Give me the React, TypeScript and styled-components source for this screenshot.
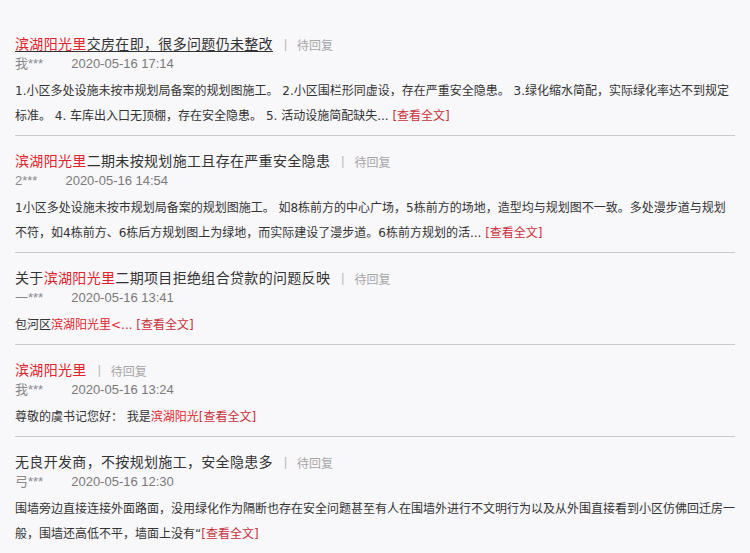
import React from "react";
import styled, { createGlobalStyle } from "styled-components";

const GlobalStyle = createGlobalStyle`
  html, body {
    margin: 0;
    padding: 0;
    background: #f8f7fa;
  }
  body {
    font-family: "Liberation Sans", "Noto Sans CJK SC", sans-serif;
    color: #333;
  }
`;

const Page = styled.div`
  width: 720px;
  padding: 18px 15px 0;
`;

const Item = styled.div`
  padding: 15px 0 6px;
  border-bottom: 1px solid #cacaca;

  &:first-child {
    padding-top: 16px;
  }
`;

const TitleRow = styled.div`
  display: flex;
  align-items: center;
  height: 20px;
`;

const Title = styled.a<{ $hover?: boolean }>`
  font-size: 14px;
  letter-spacing: 0.33px;
  line-height: 20px;
  color: #333;
  text-decoration: ${(p) => (p.$hover ? "underline" : "none")};
  text-underline-offset: 2px;
  cursor: pointer;
`;

const Red = styled.span`
  color: #e0242b;
`;

const Sep = styled.span`
  font-size: 12px;
  color: #b5b5b5;
  margin: 0 10px 0 11px;
`;

const Status = styled.span`
  font-size: 12px;
  color: #a6a6a6;
`;

const Meta = styled.div`
  margin-top: 3px;
  font-size: 13px;
  line-height: 13px;
  color: #8a8a8a;
`;

const Date = styled.span`
  margin-left: 28px;
  color: #7a7a7a;
`;

const Body = styled.p`
  margin: 9px 0 0;
  font-family: "DejaVu Sans", "Noto Sans CJK SC", sans-serif;
  font-size: 12px;
  line-height: 25px;
  color: #333;
  word-break: break-all;
`;

const More = styled.a`
  color: #c8323a;
  cursor: pointer;
`;

type Post = {
  title: React.ReactNode;
  author: string;
  date: string;
  body: React.ReactNode;
  hover?: boolean;
};

const NAME = <Red>滨湖阳光里</Red>;

const posts: Post[] = [
  {
    title: <>{NAME}交房在即，很多问题仍未整改</>,
    author: "我***",
    date: "2020-05-16 17:14",
    hover: true,
    body: (
      <>
        1.小区多处设施未按市规划局备案的规划图施工。 2.小区围栏形同虚设，存在严重安全隐患。 3.绿化缩水简配，实际绿化率达不到规定标准。 4. 车库出入口无顶棚，存在安全隐患。 5. 活动设施简配缺失...{" "}
        <More>[查看全文]</More>
      </>
    ),
  },
  {
    title: <>{NAME}二期未按规划施工且存在严重安全隐患</>,
    author: "2***",
    date: "2020-05-16 14:54",
    body: (
      <>
        1小区多处设施未按市规划局备案的规划图施工。 如8栋前方的中心广场，5栋前方的场地，造型均与规划图不一致。多处漫步道与规划不符，如4栋前方、6栋后方规划图上为绿地，而实际建设了漫步道。6栋前方规划的活...{" "}
        <More>[查看全文]</More>
      </>
    ),
  },
  {
    title: <>关于{NAME}二期项目拒绝组合贷款的问题反映</>,
    author: "一***",
    date: "2020-05-16 13:41",
    body: (
      <>
        包河区<Red>滨湖阳光里&lt;...</Red> <More>[查看全文]</More>
      </>
    ),
  },
  {
    title: NAME,
    author: "我***",
    date: "2020-05-16 13:24",
    body: (
      <>
        尊敬的虞书记您好： 我是<Red>滨湖阳光</Red>
        <More>[查看全文]</More>
      </>
    ),
  },
  {
    title: <>无良开发商，不按规划施工，安全隐患多</>,
    author: "弓***",
    date: "2020-05-16 12:30",
    body: (
      <>
        围墙旁边直接连接外面路面，没用绿化作为隔断也存在安全问题甚至有人在围墙外进行不文明行为以及从外围直接看到小区仿佛回迁房一般，围墙还高低不平，墙面上没有“
        <More>[查看全文]</More>
      </>
    ),
  },
];

export default function App() {
  return (
    <>
      <GlobalStyle />
      <Page>
        {posts.map((p, i) => (
          <Item key={i}>
            <TitleRow>
              <Title $hover={p.hover}>{p.title}</Title>
              <Sep>|</Sep>
              <Status>待回复</Status>
            </TitleRow>
            <Meta>
              {p.author}
              <Date>{p.date}</Date>
            </Meta>
            <Body>{p.body}</Body>
          </Item>
        ))}
      </Page>
    </>
  );
}
